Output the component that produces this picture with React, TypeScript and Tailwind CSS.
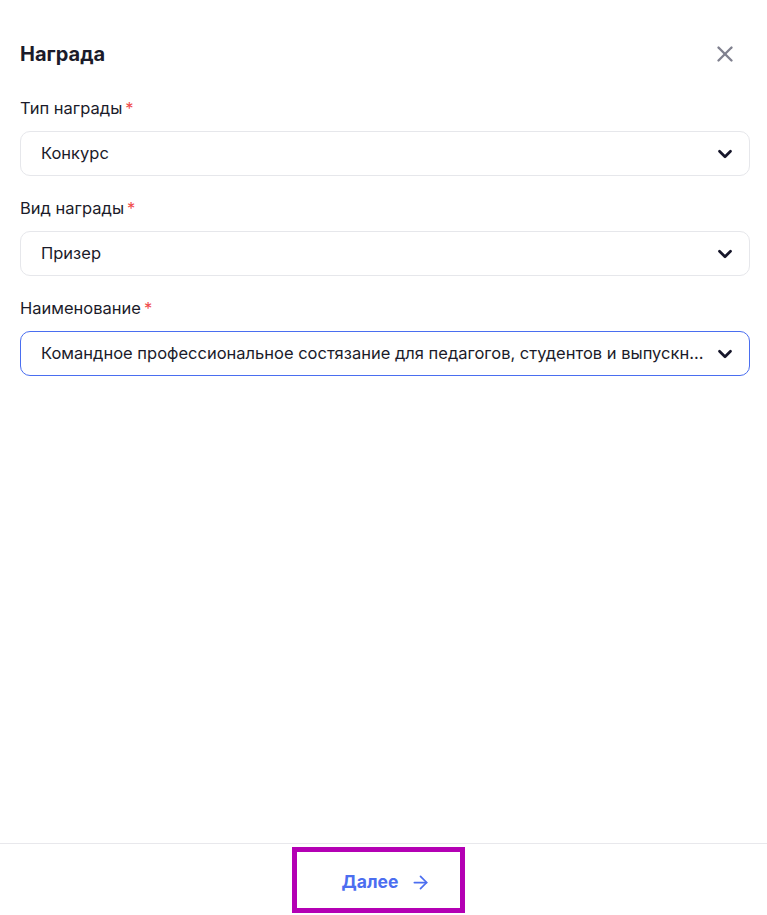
import { ChevronDown, X, ArrowRight } from "lucide-react";

const fields = [
  { label: "Тип награды", value: "Конкурс", active: false },
  { label: "Вид награды", value: "Призер", active: false },
  {
    label: "Наименование",
    value:
      "Командное профессиональное состязание для педагогов, студентов и выпускников образовательных организаций",
    active: true,
  },
];

export default function App() {
  return (
    <div
      className="h-screen flex flex-col bg-white text-[#1b1b2a]"
      style={{ fontFamily: "Inter, 'Noto Sans', sans-serif" }}
    >
      <div className="flex-1 pl-5 pr-[17px]">
        {/* Header */}
        <div className="flex items-center justify-between pt-[35px] pb-[25px]">
          <h1 className="text-[20px] font-bold leading-[38px]">Награда</h1>
          <button className="text-[#80818f] mr-[12px]">
            <X className="w-[26px] h-[26px]" strokeWidth={2.2} />
          </button>
        </div>

        <div className="flex flex-col gap-[22px]">
          {fields.map((f) => (
            <div key={f.label} className="flex flex-col gap-[13px]">
              <div className="text-[16.5px] leading-[20px]">
                {f.label}
                <span className="text-[#f04d4d] ml-[3px]">*</span>
              </div>
              <div
                className={
                  "h-[45px] rounded-[10px] border flex items-center pl-5 pr-[13px] gap-[4px] " +
                  (f.active ? "border-[#4a6ef0]" : "border-[#e6e7eb]")
                }
              >
                <span className="flex-1 truncate text-[16.5px]">{f.value}</span>
                <ChevronDown className="w-[22px] h-[22px] text-[#16162a]" strokeWidth={3} />
              </div>
            </div>
          ))}
        </div>
      </div>

      {/* Footer */}
      <div className="h-[72px] border-t border-[#e8e8ec] flex justify-center pt-[3px]">
        <button className="ml-[-10px] w-[173px] h-[66px] border-[5px] border-[#b400b4] flex items-center justify-center pl-[16px] pt-[4px] gap-[12px] text-[#4c6ef0] font-bold text-[17.5px]">
          Далее
          <ArrowRight className="w-[21px] h-[21px]" strokeWidth={2} />
        </button>
      </div>
    </div>
  );
}
